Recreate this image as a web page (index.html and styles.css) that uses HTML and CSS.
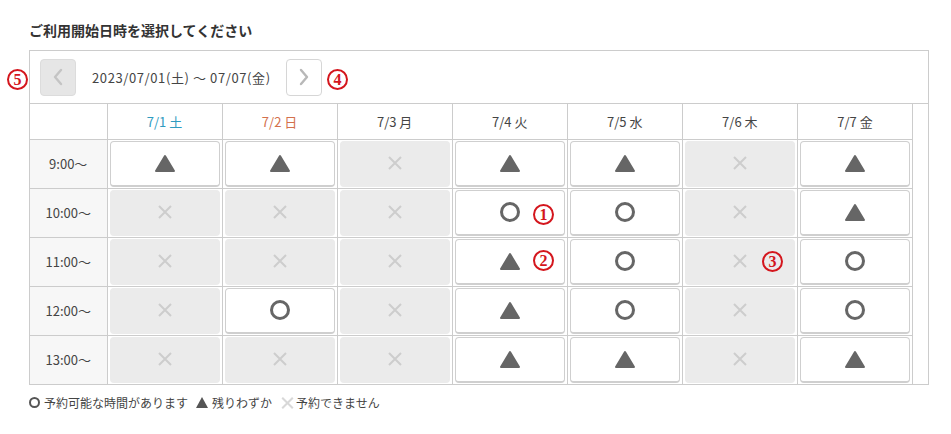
FILE: index.html
```html
<!DOCTYPE html>
<html lang="ja">

<head>
    <meta charset="UTF-8">
    <title>ご利用開始日時を選択</title>
    <link rel="stylesheet" href="styles.css">
</head>

<body>
    <div class="page">
        <h2 class="heading">ご利用開始日時を選択してください</h2>

        <div class="calendar">
            <div class="nav">
                <button class="nav-btn prev" type="button">
                    <svg width="12" height="18" viewBox="0 0 12 18"><path d="M9 2 L3 9 L9 16" fill="none" stroke="#c4c4c4" stroke-width="2.4" stroke-linecap="round" stroke-linejoin="round"/></svg>
                </button>
                <span class="range">2023/07/01(土) ～ 07/07(金)</span>
                <button class="nav-btn next" type="button">
                    <svg width="12" height="18" viewBox="0 0 12 18"><path d="M3 2 L9 9 L3 16" fill="none" stroke="#b8b8b8" stroke-width="2.4" stroke-linecap="round" stroke-linejoin="round"/></svg>
                </button>
            </div>

            <table class="slots">
                <thead>
                    <tr>
                        <th class="corner"></th>
                        <th class="sat">7/1 土</th>
                        <th class="sun">7/2 日</th>
                        <th>7/3 月</th>
                        <th>7/4 火</th>
                        <th>7/5 水</th>
                        <th>7/6 木</th>
                        <th>7/7 金</th>
                    </tr>
                </thead>
                <tbody id="rows"></tbody>
            </table>
        </div>

        <div class="legend">
            <span class="legend-item"><i class="mini-circle"></i>予約可能な時間があります</span>
            <span class="legend-item"><i class="mini-tri"></i>残りわずか</span>
            <span class="legend-item"><i class="mini-x"></i>予約できません</span>
        </div>

        <!-- 説明用の番号 -->
        <span class="mark m5">5</span>
        <span class="mark m4">4</span>
        <span class="mark m1">1</span>
        <span class="mark m2">2</span>
        <span class="mark m3">3</span>
    </div>

    <script>
        // o = 空きあり, t = 残りわずか, x = 予約不可
        var data = [
            ["9:00～", "t", "t", "x", "t", "t", "x", "t"],
            ["10:00～", "x", "x", "x", "o", "o", "x", "t"],
            ["11:00～", "x", "x", "x", "t", "o", "x", "o"],
            ["12:00～", "x", "o", "x", "t", "o", "x", "o"],
            ["13:00～", "x", "x", "x", "t", "t", "x", "t"]
        ];

        var icons = {
            o: '<svg width="22" height="22" viewBox="0 0 22 22"><circle cx="11" cy="11" r="8.5" fill="none" stroke="#666" stroke-width="3"/></svg>',
            t: '<svg width="22" height="19" viewBox="0 0 22 19"><polygon points="11,2 20,17 2,17" fill="#666" stroke="#666" stroke-width="2" stroke-linejoin="round"/></svg>',
            x: '<svg width="16" height="16" viewBox="0 0 16 16"><path d="M2 2 L14 14 M14 2 L2 14" stroke="#cdcdcd" stroke-width="2"/></svg>'
        };

        var html = "";
        data.forEach(function (row) {
            html += '<tr><td class="time">' + row[0] + '</td>';
            for (var i = 1; i < row.length; i++) {
                var cls = row[i] == "x" ? "slot off" : "slot";
                html += '<td><div class="' + cls + '">' + icons[row[i]] + '</div></td>';
            }
            html += '</tr>';
        });
        document.getElementById("rows").innerHTML = html;
    </script>
</body>

</html>
```

FILE: styles.css
```css
* {
    box-sizing: border-box;
}

body {
    margin: 0;
    background-color: #fff;
    color: #333;
    font-family: "Noto Sans CJK JP", "Noto Sans", sans-serif;
}

.page {
    position: relative;
    width: 951px;
    padding: 20px 0 0 29px;
}

.heading {
    margin: 0 0 9px;
    font-size: 14px;
    line-height: 21px;
    font-weight: bold;
    color: #333;
}

.calendar {
    width: 900px;
    border: 1px solid #ccc;
}

.nav {
    display: flex;
    align-items: center;
    height: 53px;
    padding-left: 10px;
    border-bottom: 1px solid #ccc;
}

.nav-btn {
    display: flex;
    align-items: center;
    justify-content: center;
    width: 36px;
    height: 37px;
    padding: 0;
    border: 1px solid #d6d6d6;
    border-radius: 4px;
    background-color: #fff;
}

.nav-btn.prev {
    background-color: #e6e6e6;
    border-color: #dcdcdc;
}

.range {
    margin: 0 15px 0 16px;
    font-size: 13px;
    letter-spacing: 0.6px;
    color: #444;
}

.slots {
    border-collapse: collapse;
    table-layout: fixed;
    width: 883px;
}

.slots th,
.slots td {
    border-right: 1px solid #ccc;
    border-bottom: 1px solid #ccc;
}

.slots tbody tr:last-child td {
    border-bottom: none;
}

.slots th {
    height: 35px;
    font-size: 13px;
    font-weight: normal;
    color: #444;
    background-color: #fff;
}

.slots th.corner {
    width: 77px;
}

.slots th.sat {
    color: #2f9bc0;
}

.slots th.sun {
    color: #d3704c;
}

.slots td {
    height: 49px;
    padding: 1px;
}

.slots td.time {
    text-align: center;
    font-size: 13px;
    color: #444;
    background-color: #f7f7f7;
}

.slot {
    display: flex;
    align-items: center;
    justify-content: center;
    height: 46px;
    margin: 0 1px;
    background-color: #fff;
    border: 1px solid #cfcfcf;
    border-bottom-width: 2px;
    border-radius: 4px;
}

.slot.off {
    background-color: #ebebeb;
    border-color: #ebebeb;
}

.legend {
    display: flex;
    align-items: center;
    margin-top: 9px;
    font-size: 12px;
    color: #444;
}

.legend-item {
    display: flex;
    align-items: center;
    margin-right: 8px;
}

.mini-circle {
    display: inline-block;
    width: 11px;
    height: 11px;
    margin-right: 4px;
    border: 2px solid #555;
    border-radius: 50%;
}

.mini-tri {
    display: inline-block;
    width: 0;
    height: 0;
    margin-right: 4px;
    border-left: 6px solid transparent;
    border-right: 6px solid transparent;
    border-bottom: 11px solid #555;
}

.mini-x {
    display: inline-block;
    position: relative;
    width: 14px;
    height: 14px;
    margin-right: 2px;
}

.mini-x::before,
.mini-x::after {
    content: "";
    position: absolute;
    left: 0;
    top: 6px;
    width: 15px;
    height: 2px;
    background-color: #d8d8d8;
    transform: rotate(45deg);
}

.mini-x::after {
    transform: rotate(-45deg);
}

.mark {
    position: absolute;
    width: 21px;
    height: 21px;
    border: 2px solid #d4161d;
    border-radius: 50%;
    color: #d4161d;
    font-family: "Liberation Serif", serif;
    font-weight: bold;
    font-size: 16px;
    line-height: 17px;
    text-align: center;
}

.m5 {
    left: 7px;
    top: 69px;
}

.m4 {
    left: 327px;
    top: 69px;
}

.m1 {
    left: 533px;
    top: 204px;
}

.m2 {
    left: 533px;
    top: 250px;
}

.m3 {
    left: 762px;
    top: 251px;
}
```
